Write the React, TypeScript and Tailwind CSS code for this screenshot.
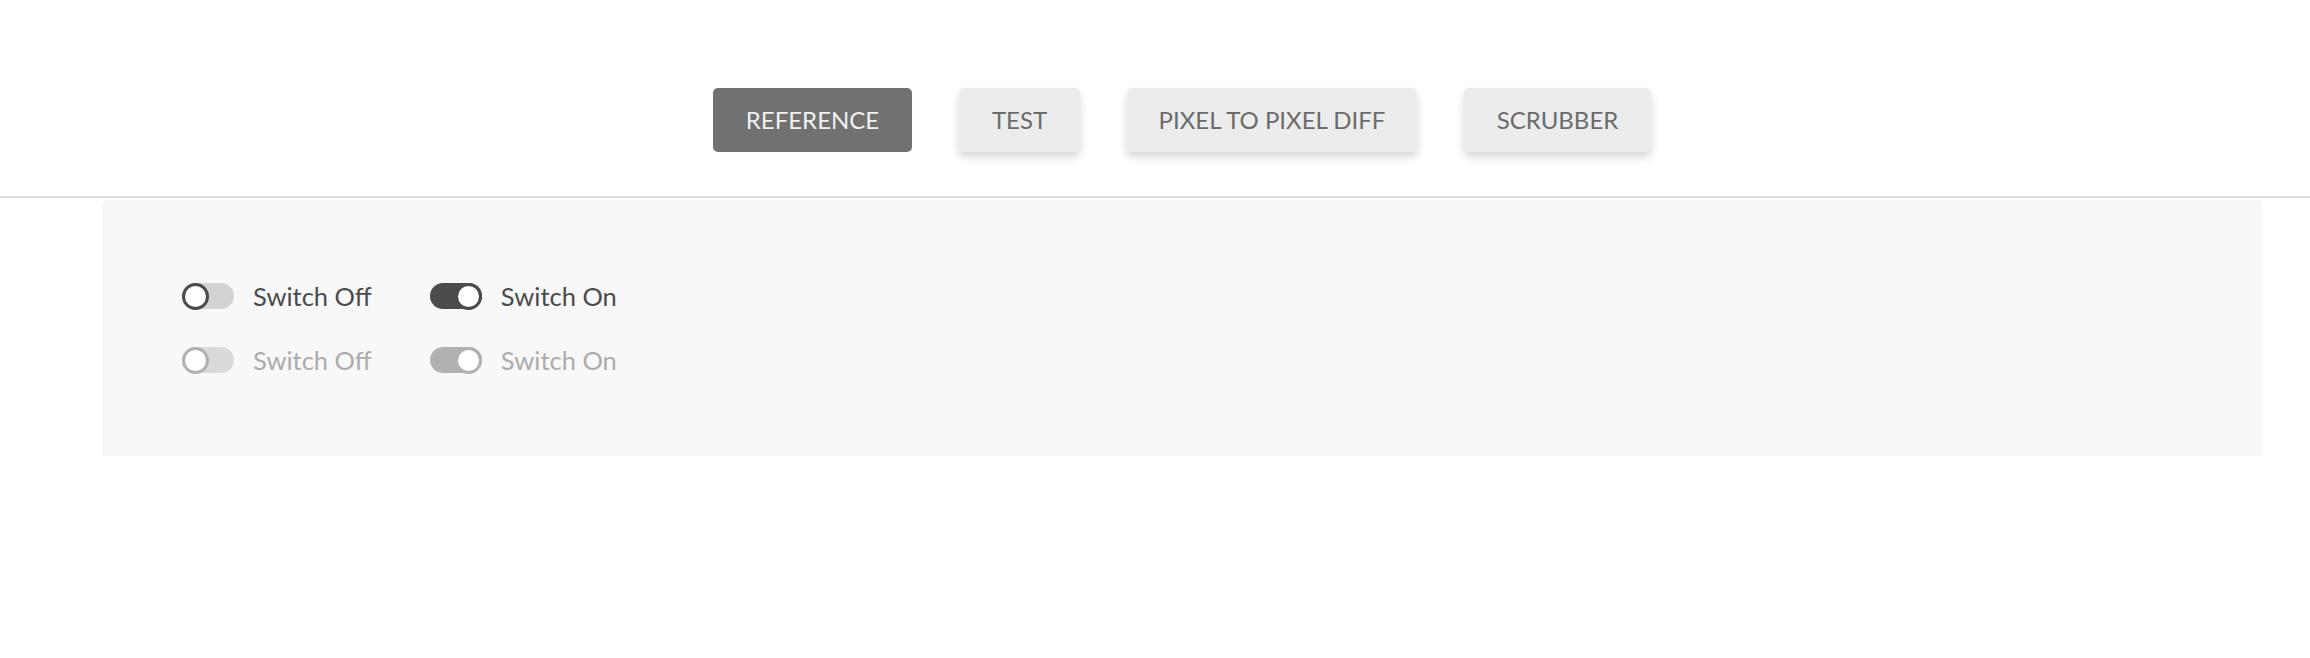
import React from "react";

const tabs = [
  { label: "REFERENCE", width: "w-[199px]", active: true },
  { label: "TEST", width: "w-[121px]", active: false },
  { label: "PIXEL TO PIXEL DIFF", width: "w-[290px]", active: false },
  { label: "SCRUBBER", width: "w-[187px]", active: false },
];

function Switch({ on, disabled, label }: { on: boolean; disabled?: boolean; label: string }) {
  const track = disabled
    ? on
      ? "bg-[#b1b1b1]"
      : "bg-[#dadada]"
    : on
      ? "bg-[#4b4b4b]"
      : "bg-[#d3d3d3]";
  const ring = disabled ? "border-[#b1b1b1]" : "border-[#4b4b4b]";
  return (
    <label className="flex h-16 items-center">
      <span className={`relative flex h-[26px] w-[52px] items-center rounded-full ${track} ${on ? "justify-end" : "justify-start"}`}>
        <span className={`h-[27px] w-[27px] rounded-full border-[3px] bg-white ${ring}`} />
      </span>
      <span className={`ml-[19px] text-[25.5px] ${disabled ? "text-[#acacac]" : "text-[#4b4b4b]"}`}>{label}</span>
    </label>
  );
}

export default function App() {
  return (
    <div className="min-h-[658px] bg-white" style={{ fontFamily: "Lato, 'Liberation Sans', sans-serif" }}>
      <header className="flex h-[196px] items-start justify-center gap-[47px] pt-[88px] pl-[54px]">
        {tabs.map((tab) => (
          <button
            key={tab.label}
            className={`h-16 rounded-[5px] text-[24px] ${tab.width} ${
              tab.active ? "bg-[#717171] text-[#f0f0f0]" : "bg-[#ececec] text-[#6b6b6b] shadow-[0_5px_9px_rgba(0,0,0,0.16)]"
            }`}
          >
            {tab.label}
          </button>
        ))}
      </header>
      <div className="h-[2px] bg-[#dddddd]" />
      <div className="mt-[2px] ml-[102px] w-[2160px] rounded-t-[5px] bg-[#f8f8f8] px-[80px] py-16">
        <div className="flex gap-[58px]">
          <Switch on={false} label="Switch Off" />
          <Switch on label="Switch On" />
        </div>
        <div className="flex gap-[58px]">
          <Switch on={false} disabled label="Switch Off" />
          <Switch on disabled label="Switch On" />
        </div>
      </div>
    </div>
  );
}
